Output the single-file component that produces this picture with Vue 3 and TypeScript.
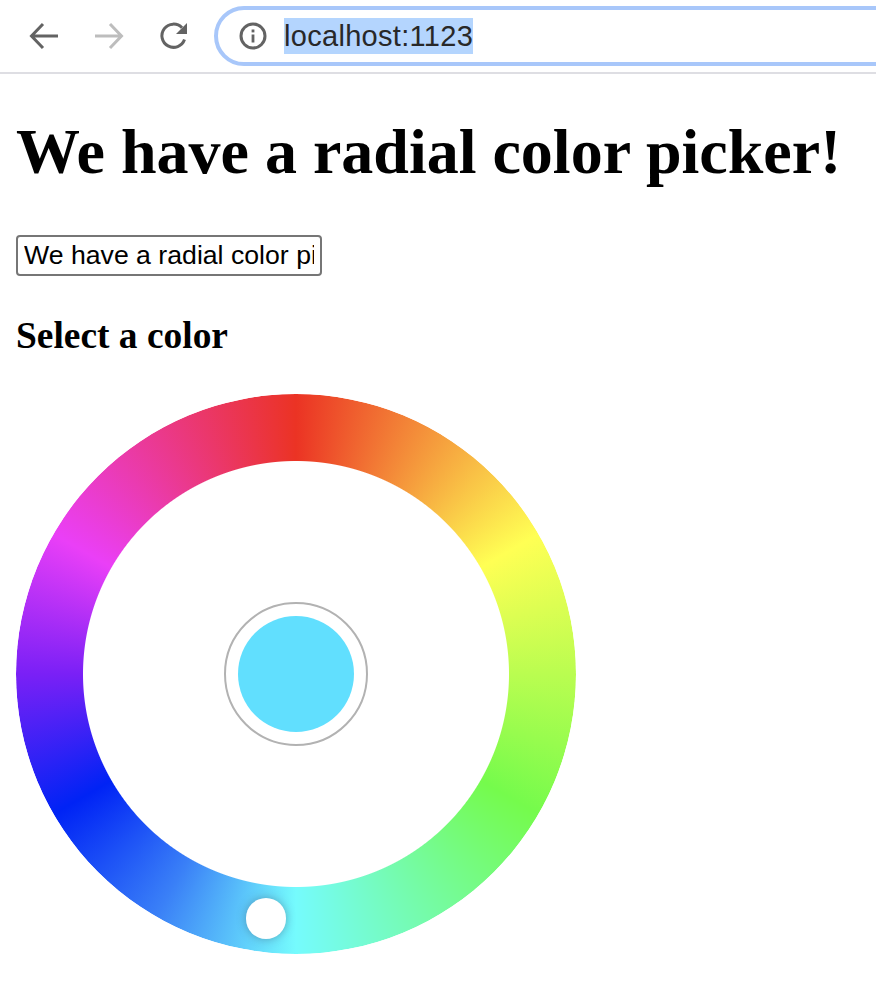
<script setup lang="ts">
const title = 'We have a radial color picker!'
const inputValue = 'We have a radial color picker!'
</script>

<template>
  <div class="page">
    <header class="toolbar">
      <svg class="icon" viewBox="0 0 32 32" width="32" height="32" fill="none" stroke="#636363" stroke-width="3">
        <path d="M30 16H4M15 4 3.500 16 15 28" />
      </svg>
      <svg class="icon" viewBox="0 0 32 32" width="32" height="32" fill="none" stroke="#bdbdbd" stroke-width="3">
        <path d="M2 16h26M17 4l11.500 12L17 28" />
      </svg>
      <svg class="icon" viewBox="0 0 32 32" width="32" height="32" fill="none">
        <path d="M26.500 19.500A11.600 11.600 0 1 1 24 7.800" stroke="#636363" stroke-width="3" />
        <path d="M29 3v11H18z" fill="#636363" />
      </svg>
      <div class="omnibox">
        <svg viewBox="0 0 28 28" width="28" height="28" fill="none">
          <circle cx="14" cy="14" r="12" stroke="#636363" stroke-width="3" />
          <rect x="12.600" y="12.500" width="2.800" height="8" fill="#636363" />
          <rect x="12.600" y="7.500" width="2.800" height="2.900" fill="#636363" />
        </svg>
        <span class="url">localhost:1123</span>
      </div>
    </header>

    <main class="content">
      <h1>{{ title }}</h1>
      <input class="field" type="text" :value="inputValue" />
      <h3>Select a color</h3>
      <div class="wheel">
        <div class="ring"></div>
        <div class="swatch-ring">
          <div class="swatch"></div>
        </div>
        <div class="knob"></div>
      </div>
    </main>
  </div>
</template>

<style>
html,
body {
  margin: 0;
  background: #fff;
}
</style>

<style scoped>
.page {
  width: 876px;
  height: 988px;
  overflow: hidden;
  font-family: "Liberation Serif", serif;
  color: #000;
}

.toolbar {
  height: 72px;
  border-bottom: 2px solid #dedee3;
  display: flex;
  align-items: center;
  padding-left: 28px;
  gap: 33px;
  overflow: hidden;
}

.icon {
  flex: none;
}

.omnibox {
  flex: none;
  width: 760px;
  height: 60px;
  box-sizing: border-box;
  margin-left: -9px;
  border: 4px solid #a8c7fa;
  border-radius: 30px;
  display: flex;
  align-items: center;
  padding-left: 21px;
  gap: 17px;
}

.url {
  font-family: "Liberation Sans", sans-serif;
  font-size: 29px;
  letter-spacing: 0.3px;
  line-height: 36px;
  color: #282828;
  background: #b4d5fe;
}

.content {
  padding: 0 16px;
}

h1 {
  margin: 41px 0 0;
  font-size: 64px;
  line-height: 74px;
  font-weight: 700;
  white-space: nowrap;
}

.field {
  display: block;
  box-sizing: border-box;
  width: 306px;
  height: 41px;
  margin: 46px 0 0;
  padding: 2px 6px;
  border: 2px solid #767676;
  border-radius: 4px;
  background: #fff;
  color: #000;
  font-family: "Liberation Sans", sans-serif;
  font-size: 26.660px;
  outline: none;
}

h3 {
  margin: 38px 0 0;
  font-size: 37.440px;
  line-height: 43px;
  font-weight: 700;
}

.wheel {
  position: relative;
  width: 560px;
  height: 560px;
  margin-top: 37px;
  display: flex;
  align-items: center;
  justify-content: center;
}

.ring {
  position: absolute;
  inset: 0;
  border-radius: 50%;
  background: conic-gradient(
    #eb3324 0deg,
    #ffff54 60deg,
    #75fb4c 120deg,
    #75fbfd 180deg,
    #3a80f7 210deg,
    #0023f5 240deg,
    #7a20f6 270deg,
    #ea3ff7 300deg,
    #eb3324 360deg
  );
  -webkit-mask: radial-gradient(circle closest-side, transparent 212.500px, #000 213.500px);
  mask: radial-gradient(circle closest-side, transparent 212.500px, #000 213.500px);
}

.swatch-ring {
  position: relative;
  width: 144px;
  height: 144px;
  box-sizing: border-box;
  border: 2px solid #b2b2b2;
  border-radius: 50%;
  display: flex;
  align-items: center;
  justify-content: center;
}

.swatch {
  width: 116px;
  height: 116px;
  border-radius: 50%;
  background: #61dffe;
}

.knob {
  position: absolute;
  left: 229.500px;
  top: 504px;
  width: 40.500px;
  height: 40.500px;
  border-radius: 50%;
  background: #fff;
  box-shadow: 0 0 10px rgba(60, 80, 110, 0.45);
}
</style>
